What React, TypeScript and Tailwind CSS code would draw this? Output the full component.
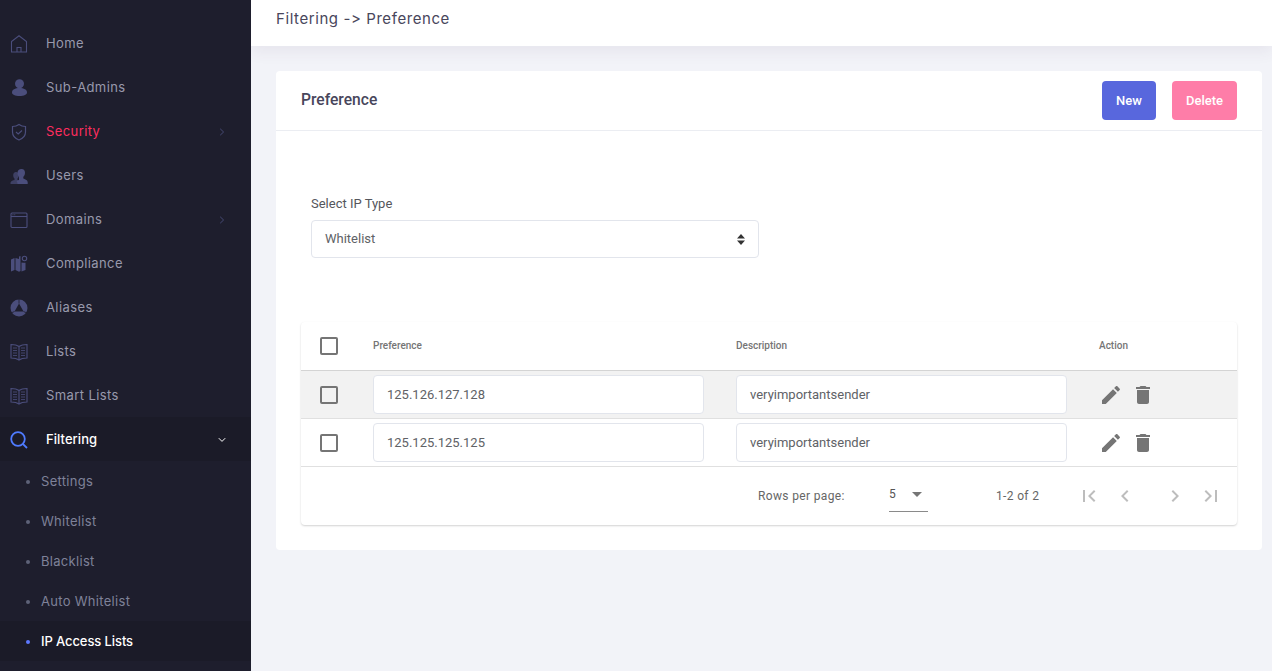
import React from "react";

const I = "#4b4e7c";

function Ico({ children }: { children: React.ReactNode }) {
  return (
    <svg width="18" height="18" viewBox="0 0 18 18" fill="none" stroke={I} strokeWidth="1.1" className="shrink-0">
      {children}
    </svg>
  );
}

const icons: Record<string, React.ReactNode> = {
  home: (
    <Ico>
      <path d="M1.500 17V6.500L9 .8l7.500 5.700V17z" />
      <path d="M7 17v-4.500h4V17" />
    </Ico>
  ),
  user: (
    <Ico>
      <circle cx="9.500" cy="4.800" r="4.500" fill={I} stroke="none" />
      <path d="M2 13.500c0-3 3-4.500 7.500-4.500S17 10.500 17 13.500c0 2-3 3.500-7.500 3.500S2 15.500 2 13.500z" fill={I} stroke="none" />
    </Ico>
  ),
  shield: (
    <Ico>
      <path d="M9 1.500c2 1.500 4 2 6.500 2V9c0 4-2.500 6.500-6.500 8-4-1.500-6.500-4-6.500-8V3.500c2.500 0 4.500-.5 6.500-2z" strokeWidth="1.200" />
      <path d="M6 9l2.200 2L12 7.500" />
    </Ico>
  ),
  users: (
    <Ico>
      <path d="M6 5c1.800 0 2.800 1.300 2.800 3.200 0 1.400-.6 2.700-1.300 3.300v1.500c1 .4 3 1 3.500 2.500v1.500H.5v-1.500C1 14 3.200 13.400 4.500 13v-1.500C3.800 10.900 3.200 9.600 3.200 8.200 3.200 6.300 4.200 5 6 5z" fill={I} fillOpacity="0.7" stroke="none" />
      <path d="M11.500 2c2.300 0 3.500 1.700 3.500 3.800 0 1.700-.8 3.300-1.700 4.100v1.700c1.500.6 4 1.300 4.400 3.400v2H7.500c0-1.500-.5-2.500-1-3 .7-.2 1.500-.5 2.500-.9V9.900C8.100 9.100 7.500 7.500 7.500 5.800 7.500 3.700 9.200 2 11.500 2z" fill={I} stroke="none" />
    </Ico>
  ),
  window: (
    <Ico>
      <rect x="1" y="2" width="16" height="14.500" rx="1" />
      <path d="M1 5.500h16" />
      <path d="M2.500 3.800h3" strokeDasharray="0.8 0.6" />
    </Ico>
  ),
  compliance: (
    <Ico>
      <path d="M1 4.500l3.500-1.500v12L1 16.500z" fill={I} stroke="none" />
      <path d="M5.500 3l3.500 1V1.500l1.500-.5v15l-1.500.7-3.500-1.700z" fill={I} stroke="none" />
      <path d="M11.500 7.500c1.500 0 2.500.5 4 .2v7.300l-4 1.500z" fill={I} stroke="none" />
      <circle cx="14.500" cy="3.500" r="2.200" fill="none" strokeWidth="1.100" />
    </Ico>
  ),
  aliases: (
    <Ico>
      <circle cx="9" cy="9" r="8.500" fill={I} stroke="none" />
      <path d="M9 4.500L13.500 12.500H4.500z" fill="#1e1e2d" stroke="none" />
      <path d="M9 0v4.500M1 14l3.500-1.500M17 14l-3.500-1.500" stroke="#1e1e2d" strokeWidth="0.800" />
    </Ico>
  ),
  book: (
    <Ico>
      <path d="M9 3.500C7 2 4 1.500 1 1.500v13.500c3 0 6 .5 8 2 2-1.500 5-2 8-2V1.500c-3 0-6 .5-8 2z" />
      <path d="M9 3.500V17" />
      <path d="M3 5h4M3 7.500h4M3 10h4M3 12.500h4M11 5h4M11 7.500h4M11 10h4M11 12.500h4" strokeWidth="0.800" />
    </Ico>
  ),
  search: (
    <svg width="18" height="18" viewBox="0 0 18 18" fill="none" stroke="#4f7bff" strokeWidth="1.800" className="shrink-0">
      <circle cx="8" cy="8" r="6.800" />
      <path d="M12.800 12.800L17 17" />
    </svg>
  ),
};

function ChevRight() {
  return (
    <svg width="6" height="8" viewBox="0 0 6 8" fill="none" stroke={I} strokeWidth="0.900">
      <path d="M1.200.8L4.600 4 1.200 7.200" />
    </svg>
  );
}

function NavItem({ icon, label, chevron, color = "text-[#9899ac]" }: { icon: string; label: string; chevron?: boolean; color?: string }) {
  return (
    <div className="h-11 flex items-center pt-[2px] pl-[10px] pr-[26px]">
      <span className="w-[36px] flex">{icons[icon]}</span>
      <span className={`flex-1 text-[13px] tracking-[0.4px] ${color}`}>{label}</span>
      {chevron && <ChevRight />}
    </div>
  );
}

function SubItem({ label, active }: { label: string; active?: boolean }) {
  return (
    <div className={`h-10 flex items-center pt-[2px] pl-[26px] ${active ? "bg-[#1b1b28]" : ""}`}>
      <span className={`w-1 h-1 rounded-full mr-[11px] ${active ? "bg-[#5d78ff]" : "bg-[#5e6278]"}`} />
      <span className={`text-[13px] ${active ? "text-white font-medium tracking-[-0.1px]" : "text-[#7e8299] tracking-[0.3px]"}`}>{label}</span>
    </div>
  );
}

function Sidebar() {
  return (
    <aside className="w-[251px] shrink-0 h-[671px] overflow-hidden bg-[#1e1e2d] pt-[21px] font-['Inter',sans-serif]">
      <NavItem icon="home" label="Home" />
      <NavItem icon="user" label="Sub-Admins" />
      <NavItem icon="shield" label="Security" chevron color="text-[#ff2d5f]" />
      <NavItem icon="users" label="Users" />
      <NavItem icon="window" label="Domains" chevron />
      <NavItem icon="compliance" label="Compliance" />
      <NavItem icon="aliases" label="Aliases" />
      <NavItem icon="book" label="Lists" />
      <NavItem icon="book" label="Smart Lists" />
      <div className="bg-[#1b1b28] h-11 flex items-center pt-[2px] pl-[10px] pr-[25px]">
        <span className="w-[36px] flex">{icons.search}</span>
        <span className="flex-1 text-[13px] tracking-[0.05px] text-white font-medium">Filtering</span>
        <svg width="8" height="6" viewBox="0 0 8 6" fill="none" stroke="#ffffff" strokeWidth="1">
          <path d="M.8 1.200L4 4.400 7.200 1.200" />
        </svg>
      </div>
      <SubItem label="Settings" />
      <SubItem label="Whitelist" />
      <SubItem label="Blacklist" />
      <SubItem label="Auto Whitelist" />
      <SubItem label="IP Access Lists" active />
    </aside>
  );
}

function Checkbox() {
  return <span className="block w-[18px] h-[18px] rounded-[2px] border-2 border-[#757575]" />;
}

function Field({ value }: { value: string }) {
  return (
    <div className="h-[39px] rounded border border-[#e2e5ec] bg-white flex items-center px-[13px] text-[13px] text-[#606266]">
      {value}
    </div>
  );
}

function EditIcon() {
  return (
    <svg width="24" height="24" viewBox="0 0 24 24" fill="#757575">
      <path d="M3 17.250V21h3.750L17.810 9.940l-3.750-3.750L3 17.250zM20.710 7.040c.39-.39.39-1.020 0-1.410l-2.340-2.340c-.39-.39-1.020-.39-1.410 0l-1.830 1.830 3.750 3.750 1.830-1.830z" />
    </svg>
  );
}

function TrashIcon() {
  return (
    <svg width="24" height="24" viewBox="0 0 24 24" fill="#757575">
      <path d="M6 19c0 1.100.9 2 2 2h8c1.100 0 2-.9 2-2V7H6v12zM19 4h-3.500l-1-1h-5l-1 1H5v2h14V4z" />
    </svg>
  );
}

function Row({ value, shaded }: { value: string; shaded?: boolean }) {
  return (
    <div className={`grid grid-cols-[56px_363px_363px_154px] items-center h-[48px] border-b border-[#e0e0e0] ${shaded ? "bg-[#f2f2f2]" : "bg-white"}`}>
      <div className="pl-[19px]"><Checkbox /></div>
      <div className="px-4"><Field value={value} /></div>
      <div className="px-4"><Field value="veryimportantsender" /></div>
      <div className="pl-4 flex gap-2">
        <EditIcon />
        <TrashIcon />
      </div>
    </div>
  );
}

function PageIcon({ d }: { d: string }) {
  return (
    <svg width="24" height="24" viewBox="0 0 24 24" fill="#bdbdbd">
      <path d={d} />
    </svg>
  );
}

function Main() {
  return (
    <main className="flex-1 min-w-0 h-[671px] overflow-hidden bg-[#f2f3f8] font-['Roboto',sans-serif]">
      <header className="relative h-[46px] bg-white pl-[25px] pt-[9px] shadow-[0_6px_14px_rgba(82,63,105,0.07)]">
        <h1 className="font-['Inter',sans-serif] text-[15px] leading-[20px] tracking-[0.58px] text-[#48465b]">Filtering -&gt; Preference</h1>
      </header>
      <section className="mt-[25px] ml-[25px] w-[986px] h-[479px] bg-white rounded">
        <div className="h-[60px] border-b border-[#ebedf2] flex items-center pl-[25px] pr-[25px]">
          <h2 className="flex-1 text-[15.600px] font-medium text-[#48465b]">Preference</h2>
          <button className="w-[54px] h-[39px] rounded bg-[#5867dd] text-white text-[13px] font-medium">New</button>
          <button className="ml-4 w-[65px] h-[39px] rounded bg-[#fe7da8] text-white text-[13px] font-medium">Delete</button>
        </div>
        <div className="pl-[35px] pt-[65px]">
          <label className="block text-[13px] leading-[16px] text-[#55565c]">Select IP Type</label>
          <div className="mt-[8px] w-[448px] h-[38px] rounded border border-[#e2e5ec] flex items-center justify-between pl-[13px] pr-[12px] text-[13px] text-[#606266]">
            <span>Whitelist</span>
            <svg width="10" height="13" viewBox="0 0 10 13" fill="#333333">
              <path d="M5 1l4 4.500H1zM5 12L1 7.500h8z" />
            </svg>
          </div>
        </div>
        <div className="ml-[25px] mt-[64px] w-[936px] h-[203px] rounded bg-white shadow-[0_1px_2px_rgba(0,0,0,0.18)]">
          <div className="grid grid-cols-[56px_363px_363px_154px] items-center h-[49px] border-b border-[#d4d4d4]">
            <div className="pl-[19px]"><Checkbox /></div>
            <div className="px-4 pb-[1px] text-[10px] font-medium text-[#757575]">Preference</div>
            <div className="px-4 pb-[1px] text-[10px] font-medium text-[#757575]">Description</div>
            <div className="px-4 pb-[1px] text-[10px] font-medium text-[#757575]">Action</div>
          </div>
          <Row value="125.126.127.128" shaded />
          <Row value="125.125.125.125" />
          <div className="h-[58px] flex items-center text-[12px] text-[#666666]">
            <span className="ml-[457px] w-[131px] tracking-[0.35px]">Rows per page:</span>
            <span className="w-[39px] h-[32px] flex items-center justify-between border-b border-[#8a8a8a] text-[#555555]">
              <span className="-mt-[3px]">5</span>
              <svg width="24" height="24" viewBox="0 0 24 24" fill="#757575" className="-mr-[1px] -mt-[3px]"><path d="M7 10l5 5 5-5z" /></svg>
            </span>
            <span className="ml-[68px] w-[81px] tracking-[0.35px]">1-2 of 2</span>
            <div className="flex">
              <PageIcon d="M18.410 16.590L13.820 12l4.590-4.590L17 6l-6 6 6 6zM6 6h2v12H6z" />
              <span className="w-3" />
              <PageIcon d="M15.410 7.410L14 6l-6 6 6 6 1.410-1.410L10.830 12z" />
              <span className="w-[26px]" />
              <PageIcon d="M10 6L8.590 7.410 13.170 12l-4.580 4.590L10 18l6-6z" />
              <span className="w-3" />
              <PageIcon d="M5.590 7.410L10.180 12l-4.590 4.590L7 18l6-6-6-6zM16 6h2v12h-2z" />
            </div>
          </div>
        </div>
      </section>
    </main>
  );
}

export default function App() {
  return (
    <div className="flex w-full h-[671px] overflow-hidden">
      <Sidebar />
      <Main />
    </div>
  );
}
